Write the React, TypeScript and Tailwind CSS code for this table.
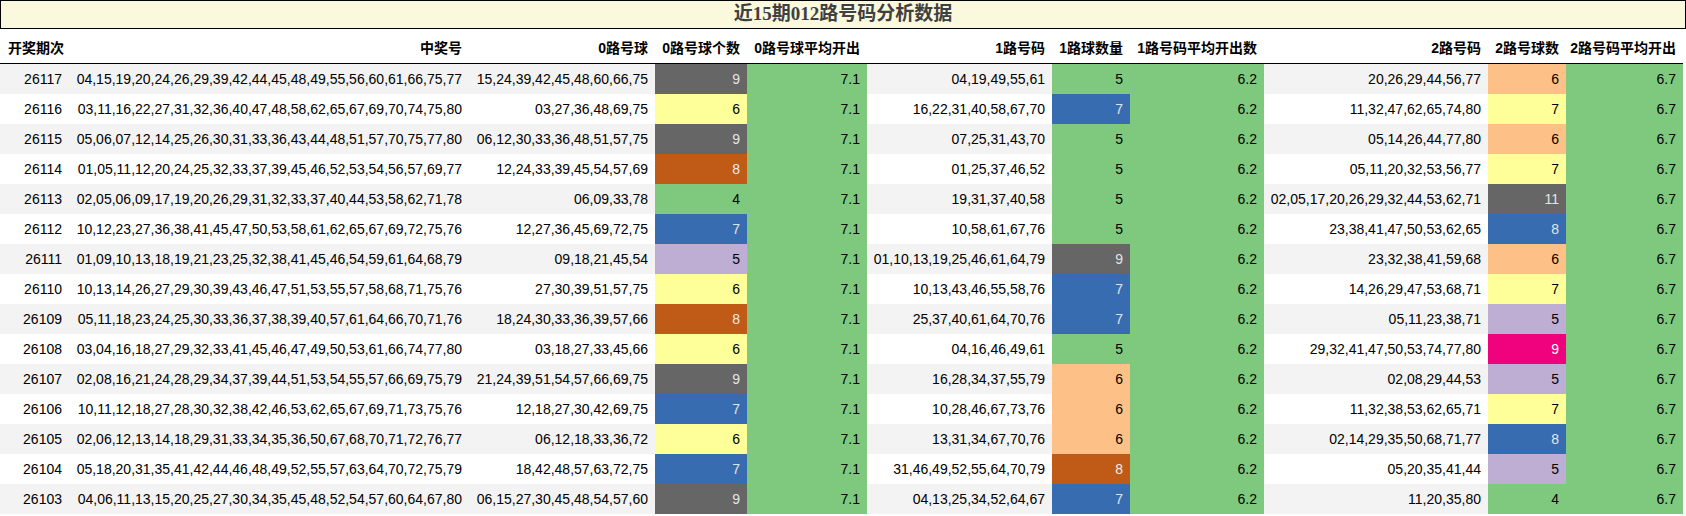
const headers = [
  "开奖期次",
  "中奖号",
  "0路号球",
  "0路号球个数",
  "0路号球平均开出",
  "1路号码",
  "1路球数量",
  "1路号码平均开出数",
  "2路号码",
  "2路号球数",
  "2路号码平均开出",
];

const widths = [
  "w-[69px]",
  "w-[400px]",
  "w-[186px]",
  "w-[92px]",
  "w-[120px]",
  "w-[185px]",
  "w-[78px]",
  "w-[134px]",
  "w-[224px]",
  "w-[78px]",
  "w-[117px]",
];

// accent palette, one key per cell colour
const swatch: Record<string, string> = {
  gray: "bg-[#666666] text-[#e4e4e4]",
  yellow: "bg-[#ffff99]",
  brown: "bg-[#bf5b17] text-[#ececec]",
  green: "bg-[#7fc97f]",
  blue: "bg-[#386cb0] text-[#e4e4e4]",
  lav: "bg-[#beaed4]",
  orange: "bg-[#fdc086]",
  pink: "bg-[#f0027f] text-white",
};

type Row = {
  issue: string;
  draw: string;
  r0: string;
  c0: string;
  r1: string;
  c1: string;
  r2: string;
  c2: string;
};

const rows: Row[] = [
  { issue: "26117", draw: "04,15,19,20,24,26,29,39,42,44,45,48,49,55,56,60,61,66,75,77", r0: "15,24,39,42,45,48,60,66,75", c0: "gray", r1: "04,19,49,55,61", c1: "green", r2: "20,26,29,44,56,77", c2: "orange" },
  { issue: "26116", draw: "03,11,16,22,27,31,32,36,40,47,48,58,62,65,67,69,70,74,75,80", r0: "03,27,36,48,69,75", c0: "yellow", r1: "16,22,31,40,58,67,70", c1: "blue", r2: "11,32,47,62,65,74,80", c2: "yellow" },
  { issue: "26115", draw: "05,06,07,12,14,25,26,30,31,33,36,43,44,48,51,57,70,75,77,80", r0: "06,12,30,33,36,48,51,57,75", c0: "gray", r1: "07,25,31,43,70", c1: "green", r2: "05,14,26,44,77,80", c2: "orange" },
  { issue: "26114", draw: "01,05,11,12,20,24,25,32,33,37,39,45,46,52,53,54,56,57,69,77", r0: "12,24,33,39,45,54,57,69", c0: "brown", r1: "01,25,37,46,52", c1: "green", r2: "05,11,20,32,53,56,77", c2: "yellow" },
  { issue: "26113", draw: "02,05,06,09,17,19,20,26,29,31,32,33,37,40,44,53,58,62,71,78", r0: "06,09,33,78", c0: "green", r1: "19,31,37,40,58", c1: "green", r2: "02,05,17,20,26,29,32,44,53,62,71", c2: "gray" },
  { issue: "26112", draw: "10,12,23,27,36,38,41,45,47,50,53,58,61,62,65,67,69,72,75,76", r0: "12,27,36,45,69,72,75", c0: "blue", r1: "10,58,61,67,76", c1: "green", r2: "23,38,41,47,50,53,62,65", c2: "blue" },
  { issue: "26111", draw: "01,09,10,13,18,19,21,23,25,32,38,41,45,46,54,59,61,64,68,79", r0: "09,18,21,45,54", c0: "lav", r1: "01,10,13,19,25,46,61,64,79", c1: "gray", r2: "23,32,38,41,59,68", c2: "orange" },
  { issue: "26110", draw: "10,13,14,26,27,29,30,39,43,46,47,51,53,55,57,58,68,71,75,76", r0: "27,30,39,51,57,75", c0: "yellow", r1: "10,13,43,46,55,58,76", c1: "blue", r2: "14,26,29,47,53,68,71", c2: "yellow" },
  { issue: "26109", draw: "05,11,18,23,24,25,30,33,36,37,38,39,40,57,61,64,66,70,71,76", r0: "18,24,30,33,36,39,57,66", c0: "brown", r1: "25,37,40,61,64,70,76", c1: "blue", r2: "05,11,23,38,71", c2: "lav" },
  { issue: "26108", draw: "03,04,16,18,27,29,32,33,41,45,46,47,49,50,53,61,66,74,77,80", r0: "03,18,27,33,45,66", c0: "yellow", r1: "04,16,46,49,61", c1: "green", r2: "29,32,41,47,50,53,74,77,80", c2: "pink" },
  { issue: "26107", draw: "02,08,16,21,24,28,29,34,37,39,44,51,53,54,55,57,66,69,75,79", r0: "21,24,39,51,54,57,66,69,75", c0: "gray", r1: "16,28,34,37,55,79", c1: "orange", r2: "02,08,29,44,53", c2: "lav" },
  { issue: "26106", draw: "10,11,12,18,27,28,30,32,38,42,46,53,62,65,67,69,71,73,75,76", r0: "12,18,27,30,42,69,75", c0: "blue", r1: "10,28,46,67,73,76", c1: "orange", r2: "11,32,38,53,62,65,71", c2: "yellow" },
  { issue: "26105", draw: "02,06,12,13,14,18,29,31,33,34,35,36,50,67,68,70,71,72,76,77", r0: "06,12,18,33,36,72", c0: "yellow", r1: "13,31,34,67,70,76", c1: "orange", r2: "02,14,29,35,50,68,71,77", c2: "blue" },
  { issue: "26104", draw: "05,18,20,31,35,41,42,44,46,48,49,52,55,57,63,64,70,72,75,79", r0: "18,42,48,57,63,72,75", c0: "blue", r1: "31,46,49,52,55,64,70,79", c1: "brown", r2: "05,20,35,41,44", c2: "lav" },
  { issue: "26103", draw: "04,06,11,13,15,20,25,27,30,34,35,45,48,52,54,57,60,64,67,80", r0: "06,15,27,30,45,48,54,57,60", c0: "gray", r1: "04,13,25,34,52,64,67", c1: "blue", r2: "11,20,35,80", c2: "green" },
];

const count = (s: string) => String(s.split(",").length);

export default function App() {
  return (
    <div className="w-[1686px] h-[516px] overflow-hidden bg-white text-black font-['Liberation_Sans','Noto_Sans_CJK_SC',sans-serif]">
      {/* Title */}
      <div className="h-[29px] border border-black bg-[#faf8dd] flex items-center justify-center">
        <span className="text-[19px] font-bold text-[#404040] font-['Liberation_Serif','Noto_Sans_CJK_SC',serif]">
          近15期012路号码分析数据
        </span>
      </div>

      {/* Header */}
      <div className="flex h-[35px] w-[1683px] border-b border-black text-[14px] font-bold">
        {headers.map((h, i) => (
          <div
            key={h}
            className={`${widths[i]} flex items-center pt-[5px] ${i === 0 ? "justify-start pl-[8px]" : "justify-end pr-[7px]"} whitespace-nowrap`}
          >
            {h}
          </div>
        ))}
      </div>

      {/* Rows */}
      {rows.map((r, idx) => {
        const cells: [string, string][] = [
          [r.issue, ""],
          [r.draw, ""],
          [r.r0, ""],
          [count(r.r0), swatch[r.c0]],
          ["7.1", swatch.green],
          [r.r1, ""],
          [count(r.r1), swatch[r.c1]],
          ["6.2", swatch.green],
          [r.r2, ""],
          [count(r.r2), swatch[r.c2]],
          ["6.7", swatch.green],
        ];
        return (
          <div
            key={r.issue}
            className={`flex h-[30px] w-[1683px] text-[14px] ${idx % 2 === 0 ? "bg-[#f3f3f3]" : "bg-white"}`}
          >
            {cells.map(([v, c], i) => (
              <div
                key={i}
                className={`${widths[i]} ${c} flex items-center justify-end pr-[7px] whitespace-nowrap`}
              >
                {v}
              </div>
            ))}
          </div>
        );
      })}
    </div>
  );
}
